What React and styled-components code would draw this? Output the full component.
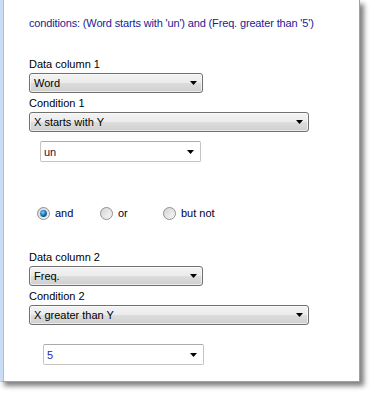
import React, { useState } from 'react';
import styled, { createGlobalStyle } from 'styled-components';

const GlobalStyle = createGlobalStyle`
body {
    margin: 0;
    background: #ffffff;
    font-family: 'Liberation Sans', Arial, sans-serif;
}
`;

const Frame = styled.div`
width: 375px;
height: 398px;
overflow: hidden;
background: #ffffff;
`;

const Panel = styled.div`
width: 360px;
height: 382px;
box-sizing: border-box;
border-left: 3px solid #c9ddf3;
border-right: 1px solid #a0a0a0;
border-bottom: 1px solid #a0a0a0;
box-shadow: inset 1px 0 0 #a9bfd9, 4px 4px 5px rgba(0, 0, 0, 0.5);
background: #ffffff;
padding: 16px 0 0 26px;
display: flex;
flex-direction: column;
`;

const Title = styled.div`
font-size: 11px;
line-height: 14px;
letter-spacing: -0.15px;
color: #1a1a96;
margin-bottom: 27px;
`;

const Label = styled.div`
font-size: 11px;
line-height: 14px;
color: #000000;
margin-bottom: 2px;
`;

const SelectBox = styled.div`
width: ${(p) => p.width}px;
height: 20px;
box-sizing: border-box;
border: 1px solid #707070;
border-radius: 3px;
background: linear-gradient(#f3f3f3 0%, #ebebeb 50%, #dddddd 50%, #cfcfcf 100%);
box-shadow: inset 0 0 0 1px rgba(255, 255, 255, 0.6);
display: flex;
align-items: center;
justify-content: space-between;
padding: 0 5px 0 4px;
font-size: 11px;
color: #000000;
margin-bottom: 3px;
`;

const ComboBox = styled.div`
width: 161px;
height: 21px;
box-sizing: border-box;
margin-left: ${(p) => p.indent}px;
margin-top: ${(p) => p.gap}px;
border: 1px solid #c4c4c4;
border-top-color: #ababab;
border-radius: 2px;
background: #ffffff;
display: flex;
align-items: center;
justify-content: space-between;
padding: 0 6px 0 3px;
font-size: 11px;
color: ${(p) => p.color};
`;

const RadioRow = styled.div`
display: flex;
height: 16px;
align-items: center;
margin: 43px 0 29px 8px;
`;

const RadioItem = styled.label`
width: ${(p) => p.width}px;
display: flex;
align-items: center;
gap: 5px;
font-size: 11px;
color: #000033;
cursor: pointer;
`;

const Arrow = () => (
    <svg width="7" height="4" viewBox="0 0 7 4">
        <polygon points="0,0 7,0 3.5,4" fill="#000000" />
    </svg>
);

const RadioDot = ({ checked }) => (
    <svg width="13" height="13" viewBox="0 0 13 13">
        <defs>
            <linearGradient id="rbg" x1="0" y1="0" x2="1" y2="1">
                <stop offset="0" stopColor="#cfcfcf" />
                <stop offset="1" stopColor="#ffffff" />
            </linearGradient>
            <radialGradient id="rdot" cx="0.4" cy="0.35" r="0.7">
                <stop offset="0" stopColor="#7fd7fb" />
                <stop offset="0.5" stopColor="#2385c6" />
                <stop offset="1" stopColor="#0b3f73" />
            </radialGradient>
        </defs>
        <circle cx="6.5" cy="6.5" r="6" fill="url(#rbg)" stroke="#8f8f8f" />
        <circle cx="6.5" cy="6.5" r="4.3" fill="none" stroke="#e2e2e2" strokeWidth="0.8" />
        {checked && <circle cx="6.5" cy="6.5" r="3.4" fill="url(#rdot)" />}
    </svg>
);

const Select = ({ value, width }) => (
    <SelectBox width={width}>
        <span>{value}</span>
        <Arrow />
    </SelectBox>
);

const Combo = ({ value, indent, gap, color }) => (
    <ComboBox indent={indent} gap={gap} color={color}>
        <span>{value}</span>
        <Arrow />
    </ComboBox>
);

const App = () => {
    const [join, setJoin] = useState('and');
    const options = [
        { key: 'and', width: 63 },
        { key: 'or', width: 63 },
        { key: 'but not', width: 80 },
    ];

    return (
        <Frame>
            <GlobalStyle />
            <Panel>
                <Title>conditions: (Word starts with 'un') and (Freq. greater than '5')</Title>

                <Label>Data column 1</Label>
                <Select value="Word" width={174} />
                <Label>Condition 1</Label>
                <Select value="X starts with Y" width={280} />
                <Combo value="un" indent={11} gap={6} color="#14143c" />

                <RadioRow>
                    {options.map((o) => (
                        <RadioItem key={o.key} width={o.width} onClick={() => setJoin(o.key)}>
                            <RadioDot checked={join === o.key} />
                            {o.key}
                        </RadioItem>
                    ))}
                </RadioRow>

                <Label>Data column 2</Label>
                <Select value="Freq." width={174} />
                <Label>Condition 2</Label>
                <Select value="X greater than Y" width={280} />
                <Combo value="5" indent={14} gap={16} color="#1c2ab0" />
            </Panel>
        </Frame>
    );
};

export default App;
